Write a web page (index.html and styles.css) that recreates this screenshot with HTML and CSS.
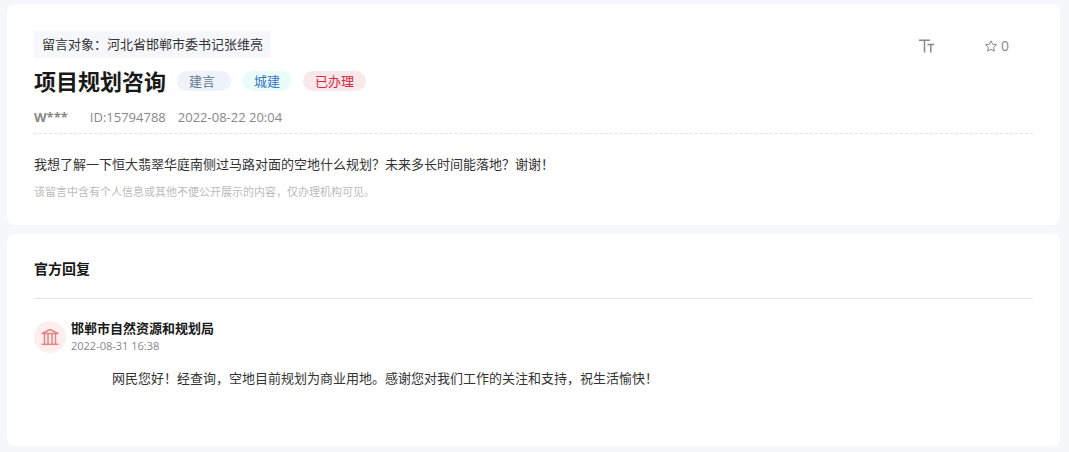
FILE: index.html
```html
<!DOCTYPE html>
<html lang="zh-CN">
<head>
    <meta charset="UTF-8">
    <meta name="viewport" content="width=device-width, initial-scale=1.0">
    <title>项目规划咨询</title>
    <link rel="stylesheet" href="styles.css">
</head>
<body>

<main class="page">
    <article class="card message">
        <div class="topbar">
            <p class="target">留言对象：河北省邯郸市委书记张维亮</p>
            <div class="actions">
                <button class="action" type="button" aria-label="字号">
                    <svg width="16" height="14" viewBox="0 0 16 14" fill="none" stroke="currentColor" stroke-width="1.5">
                        <path d="M0 1.2h11M5.5 1.2V13.5M8.5 5.5h6.5M11.8 5.5v8"/>
                    </svg>
                </button>
                <button class="action star" type="button">
                    <svg width="12" height="12" viewBox="0 0 12 12" fill="none" stroke="currentColor" stroke-linejoin="round">
                        <path d="M6 .8l1.6 3.4 3.8.5-2.8 2.6.7 3.8L6 9.3l-3.3 1.8.7-3.8L.6 4.7l3.8-.5z"/>
                    </svg>
                    <span>0</span>
                </button>
            </div>
        </div>
        <div class="heading">
            <h1>项目规划咨询</h1>
            <span class="tag tag-type">建言</span>
            <span class="tag tag-field">城建</span>
            <span class="tag tag-done">已办理</span>
        </div>
        <div class="meta">
            <b class="user">W***</b>
            <span>ID:15794788</span>
            <time>2022-08-22 20:04</time>
        </div>
        <p class="content">我想了解一下恒大翡翠华庭南侧过马路对面的空地什么规划？未来多长时间能落地？谢谢！</p>
        <p class="note">该留言中含有个人信息或其他不便公开展示的内容，仅办理机构可见。</p>
    </article>

    <section class="card reply">
        <h2>官方回复</h2>
        <div class="org">
            <span class="avatar">
                <svg width="18" height="18" viewBox="0 0 18 18" fill="none" stroke="currentColor" stroke-linejoin="round">
                    <path d="M1 5.5L9 1.5l8 4z" stroke-width="1.4"/>
                    <path d="M3.5 6v10M7 6v10M11 6v10M14.5 6v10" stroke-width="1.5"/>
                    <path d="M.5 16.3h17" stroke-width="1.5"/>
                </svg>
            </span>
            <div>
                <h3>邯郸市自然资源和规划局</h3>
                <time>2022-08-31 16:38</time>
            </div>
        </div>
        <p class="answer">网民您好！经查询，空地目前规划为商业用地。感谢您对我们工作的关注和支持，祝生活愉快！</p>
    </section>
</main>

</body>
</html>
```

FILE: styles.css
```css
* {
    box-sizing: border-box;
}
body {
    margin: 0;
    background-color: #f6f7f9;
    color: #333;
    font-family: "Open Sans", "Noto Sans CJK SC", sans-serif;
    font-size: 13px;
    line-height: 20px;
}
h1, h2, h3, p {
    margin: 0;
}
.page {
    display: flex;
    flex-direction: column;
    gap: 9px;
    padding: 4px 9px 6px 7px;
}
.card {
    padding: 27px;
    background: white;
    border-radius: 8px;
}
.message {
    padding-bottom: 22px;
}
.topbar {
    display: flex;
    justify-content: space-between;
    align-items: center;
}
.target {
    padding: 3px 8px 4px;
    background: #f6f7fb;
    border-radius: 2px;
}
.actions {
    display: flex;
    gap: 50px;
    padding: 2px 24px 0 0;
}
.action {
    display: flex;
    align-items: center;
    gap: 4px;
    padding: 0;
    border: none;
    background: none;
    color: #888;
    font-family: inherit;
    font-size: 14px;
    line-height: 20px;
    cursor: pointer;
}
.heading {
    display: flex;
    align-items: center;
    gap: 11px;
    height: 45px;
}
h1 {
    color: #191919;
    font-size: 22px;
    line-height: 32px;
}
.tag {
    padding: 0 12px;
    border-radius: 10px;
}
.tag-type {
    padding-right: 16px;
    background: #eef2f9;
    color: #66788f;
}
.tag-field {
    background: #eafcfa;
    color: #3a73c7;
}
.tag-done {
    background: #fbe8ea;
    color: #d7263d;
}
.meta {
    display: flex;
    gap: 12px;
    padding: 4px 0 6px;
    border-bottom: 1px dashed #e3e3e3;
    color: #888;
}
.user {
    margin-right: 10px;
}
.content {
    padding: 20px 0 8px;
}
.note {
    padding-bottom: 1px;
    color: #bbb;
    font-size: 11px;
}
.reply {
    padding-top: 25px;
    padding-bottom: 57px;
}
h2 {
    padding-bottom: 19px;
    border-bottom: 1px solid #e6e6e6;
    color: #191919;
    font-size: 14px;
    line-height: 20px;
}
.org {
    display: flex;
    gap: 5px;
    padding-top: 19px;
}
.avatar {
    display: flex;
    align-items: center;
    justify-content: center;
    width: 32px;
    height: 32px;
    margin-top: 3px;
    border-radius: 50%;
    background: #ffeeee;
    color: #e48585;
}
h3 {
    color: #191919;
    font-size: 13px;
    line-height: 20px;
}
.org time {
    display: block;
    color: #888;
    font-size: 11px;
    line-height: 16px;
}
.answer {
    padding: 14px 0 1px 78px;
}
```
